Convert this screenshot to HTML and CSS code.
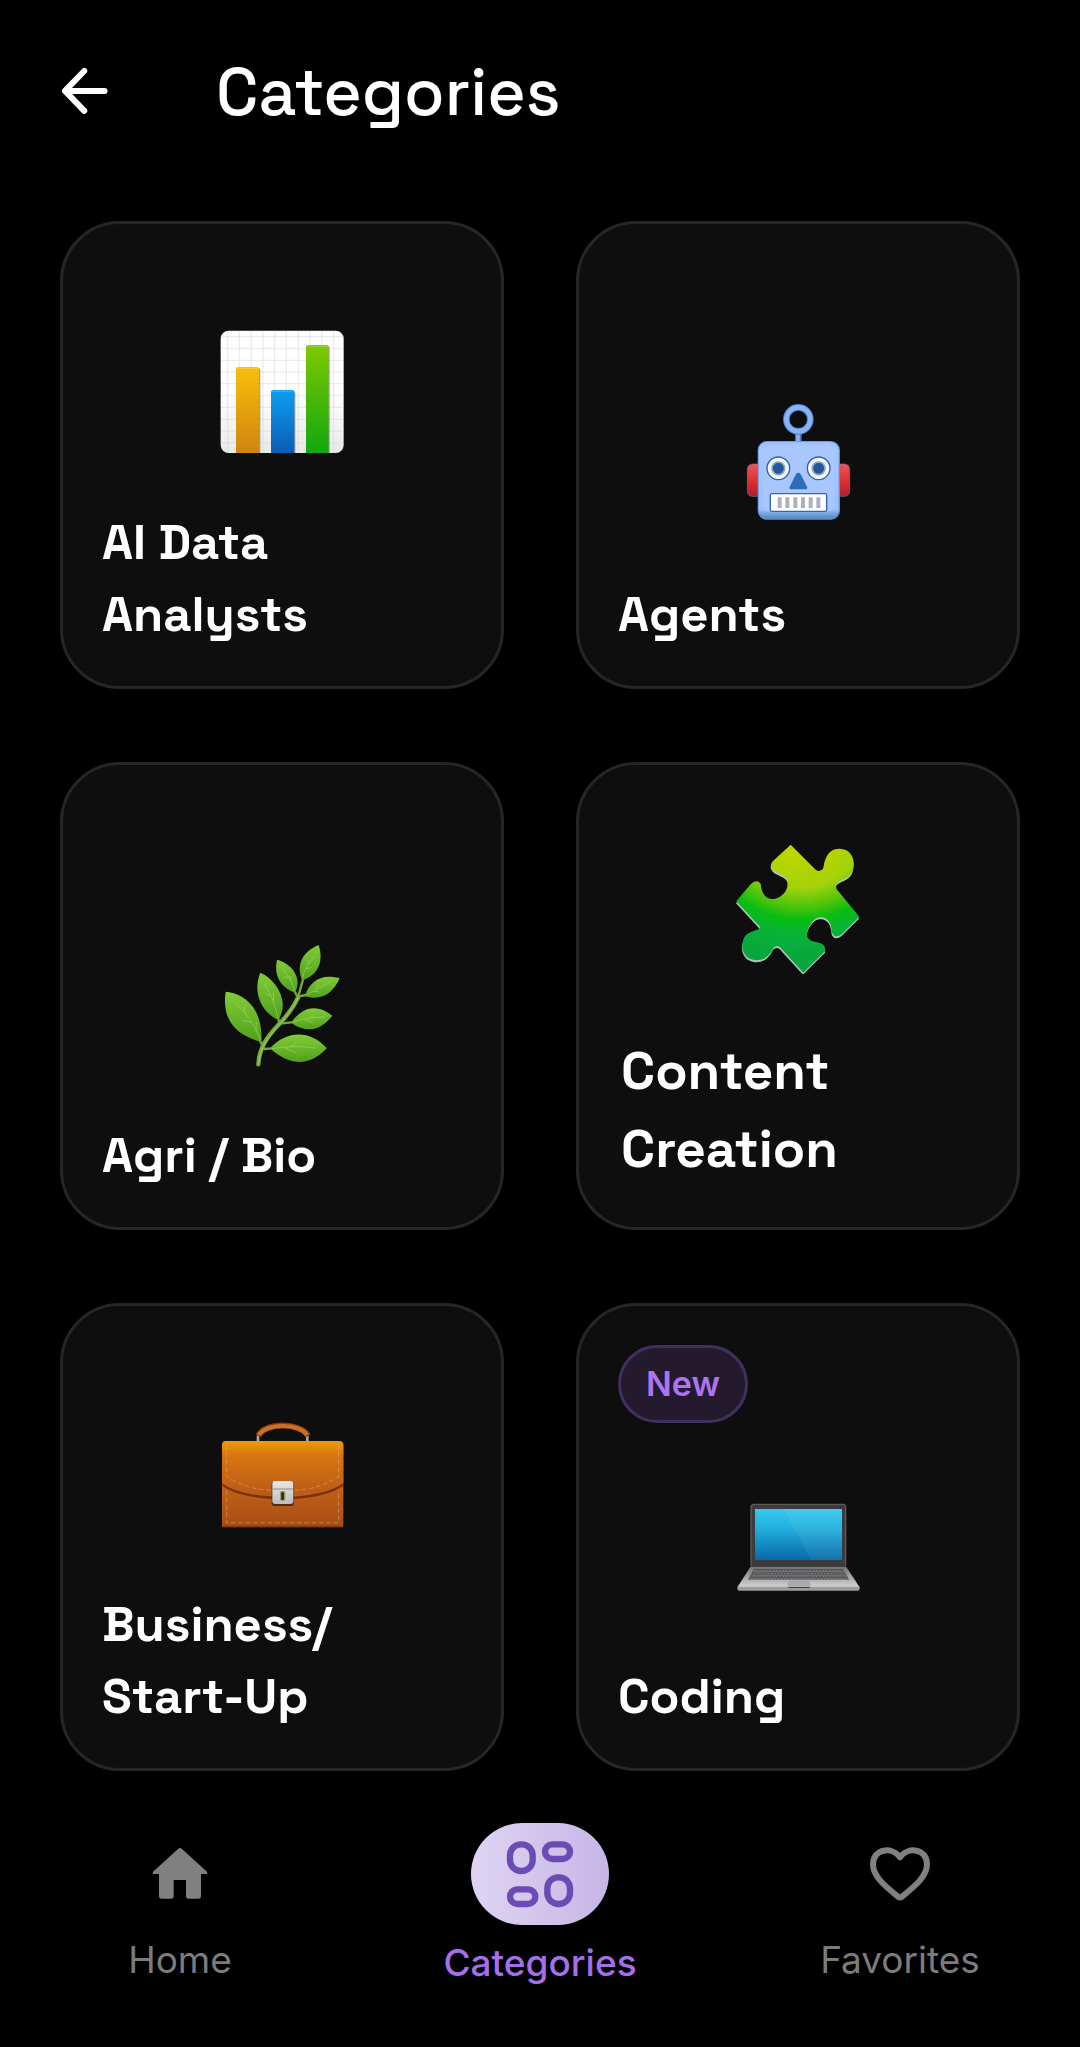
FILE: index.html
```html
<!DOCTYPE html>
<html lang="en">
<head>
<meta charset="utf-8">
<meta name="viewport" content="width=device-width, initial-scale=1">
<title>Categories</title>
<link rel="stylesheet" href="styles.css">
</head>
<body>
<div class="app">
  <header class="header">
    <button class="back" type="button" aria-label="Back">
      <svg class="back-icon" viewBox="84 110 146 146" aria-hidden="true"><path d="M152 124 98 180l54 56M100 180h109" fill="none" stroke="#fff" stroke-width="17" stroke-linecap="round" stroke-linejoin="round"/></svg>
    </button>
    <h1 class="title">Categories</h1>
  </header>

  <main class="grid">
    <a class="card" href="#analysts">
      <svg class="emoji" viewBox="60 60 372 372" aria-hidden="true">
        <defs>
          <linearGradient id="paper" x2="0" y2="1"><stop offset=".5" stop-color="#fff"/><stop offset="1" stop-color="#e9e9e9"/></linearGradient>
          <linearGradient id="amber" x2="0" y2="1"><stop stop-color="#f8bf0c"/><stop offset="1" stop-color="#d08410"/></linearGradient>
          <linearGradient id="blue" x2="0" y2="1"><stop stop-color="#0c9ff0"/><stop offset="1" stop-color="#0c5cb4"/></linearGradient>
          <linearGradient id="lime" x2="0" y2="1"><stop stop-color="#80c800"/><stop offset="1" stop-color="#10a810"/></linearGradient>
        </defs>
        <rect x="62" y="62" width="369" height="367" rx="24" fill="url(#paper)"/>
        <path d="M83 63v365M118 63v365M154 63v365M189 63v365M224 63v365M259 63v365M295 63v365M330 63v365M365 63v365M401 63v365M63 80h367M63 115h367M63 151h367M63 186h367M63 221h367M63 257h367M63 292h367M63 328h367M63 363h367M63 398h367" stroke="#d4d4d4" stroke-width="2" opacity=".8"/>
        <path d="M112 174h63q6 0 6 6v249h-73V180zM217 243h63q6 0 6 6v180h-73V249zM322 108h61q6 0 6 6v315h-71V114z" fill="#555" opacity=".55"/>
        <path d="M114 171h57q6 0 6 6v252h-69V177q0-6 6-6z" fill="url(#amber)"/>
        <path d="M219 240h58q6 0 6 6v183h-70V246q0-6 6-6z" fill="url(#blue)"/>
        <path d="M324 105h56q6 0 6 6v318h-68V111q0-6 6-6z" fill="url(#lime)"/>
        <path d="M112 175h61M217 244h61M322 109h60" stroke="#fff" stroke-width="3" opacity=".22"/>
      </svg>
      <span class="name">AI Data Analysts</span>
    </a>

    <a class="card" href="#agents">
      <svg class="emoji" viewBox="33 36 372 372" aria-hidden="true">
        <defs>
          <linearGradient id="ear" x2="0" y2="1"><stop stop-color="#ee5555"/><stop offset=".6" stop-color="#d92b30"/><stop offset="1" stop-color="#a91f2b"/></linearGradient>
          <linearGradient id="head" x2="0" y2="1"><stop stop-color="#9dc0ff"/><stop offset=".1" stop-color="#a9c7ff"/><stop offset=".88" stop-color="#9dc1fa"/><stop offset="1" stop-color="#5289c4"/></linearGradient>
        </defs>
        <path d="M102 222H84q-17 0-17 18v62q0 17 17 17h18zM340 222h17q17 0 17 18v62q0 17-17 17h-17z" fill="url(#ear)" stroke="#76709a" stroke-width="2"/>
        <path d="M220 130v28" stroke="#4777bd" stroke-width="20"/><path d="M219 130v28" stroke="#88b4f5" stroke-width="11"/>
        <circle cx="220" cy="88" r="36" fill="none" stroke="#4d7fca" stroke-width="20"/>
        <circle cx="220" cy="88" r="36" fill="none" stroke="#89b3f5" stroke-width="14"/>
        <rect x="98" y="153" width="247" height="236" rx="27" fill="#5d91d6"/>
        <rect x="101" y="155" width="240" height="230" rx="26" fill="url(#head)"/>
        <rect x="112" y="166" width="216" height="198" rx="18" fill="#a9c6ff"/>
        <g fill="#f4f5f5" stroke="#2e64a8" stroke-width="4"><circle cx="160" cy="235" r="34"/><circle cx="281" cy="235" r="34"/></g>
        <g fill="#23569a" stroke="#8fa7bd" stroke-width="5"><circle cx="160" cy="235" r="19"/><circle cx="281" cy="235" r="19"/></g>
        <path d="M220 248q5 0 8 6l18 36q3 8-6 8h-40q-9 0-6-8l18-36q3-6 8-6z" fill="#2e6bbb"/>
        <rect x="136" y="311" width="169" height="53" rx="5" fill="#fff" stroke="#3468ab" stroke-width="4"/>
        <path d="M164 322v32M187 322v32M211 322v32M234 322v32M257 322v32M280 322v32" stroke="#afb0c4" stroke-width="12"/>
      </svg>
      <span class="name">Agents</span>
    </a>

    <a class="card" href="#agri">
      <svg class="emoji" viewBox="30 36 372 372" aria-hidden="true">
        <defs>
          <linearGradient id="leaf" x2="0" y2="1"><stop stop-color="#82cc38"/><stop offset=".5" stop-color="#68b72a"/><stop offset="1" stop-color="#51a01d"/></linearGradient>
        </defs>
        <g fill="none" stroke="#75aa3b" stroke-linecap="round">
          <path d="M145 400C148 350 169 320 207 280 235 250 252 226 264 200" stroke-width="13"/>
          <path d="M264 200q7-27 16-58M264 200l-11-20M264 197l24-5M208 278l-4-20M211 278l32-4M160 348l-10-18M163 354l23-2" stroke-width="7"/>
        </g>
        <path d="M146 398C151 350 170 321 208 280 235 250 252 226 264 200" fill="none" stroke="#a8ce69" stroke-width="3"/>
        <g fill="url(#leaf)">
          <path d="M47 182C92 185 160 221 154 333 101 318 32 286 47 182z"/>
          <path d="M151 125C193 142 242 208 205 267 162 249 124 192 151 125z"/>
          <path d="M201 86C242 96 279 139 255 185 216 171 190 139 201 86z"/>
          <path d="M326 42C341 89 327 132 276 148 257 99 279 61 326 42z"/>
          <path d="M389 142C369 187 333 212 284 195 299 153 332 126 389 142z"/>
          <path d="M367 254C331 300 291 308 243 275 280 224 323 220 367 254z"/>
          <path d="M350 352C300 406 240 407 180 352 231 297 302 297 350 352z"/>
        </g>
        <g fill="none" stroke="#b5df73" stroke-width="3" opacity=".5">
          <path d="M78 217q52 50 74 111M163 158q32 51 41 105M217 112q32 37 36 68M315 75q-31 31-38 68M362 153q-40 20-73 39M342 258q-52 1-94 15M316 351q-69-9-130 2"/>
          <path d="M105 249l-2-23m23 48-28-6m40 34 1-29M183 196l-16-9m23 27 1-29M234 141l-15-4m22 16 1-17M294 102l-1-15m-5 27 17-5M318 176l8-14m-16 18 18 3M294 264l15-10m-26 12 27 8M240 348l20-12m-38 13 38 17"/>
        </g>
      </svg>
      <span class="name">Agri / Bio</span>
    </a>

    <a class="card card-large" href="#content">
      <svg class="emoji" viewBox="39 42 390 390" aria-hidden="true">
        <defs>
          <radialGradient id="puzzle" gradientUnits="userSpaceOnUse" cx="245" cy="10" r="420" gradientTransform="translate(0 2) scale(1 .9)"><stop offset=".2" stop-color="#bad500"/><stop offset=".43" stop-color="#a4d20a"/><stop offset=".6" stop-color="#42c20b"/><stop offset=".68" stop-color="#08bd12"/><stop offset=".82" stop-color="#08b13a"/><stop offset="1" stop-color="#08a63c"/></radialGradient>
          <path id="piece" d="M212 44 287 119Q300 129 311 114C313 90 323 55 359 56 394 57 407 88 399 119 391 151 350 146 348 168Q347 175 355 184L418 260 366 312Q346 328 336 308C335 285 327 259 298 262 272 267 253 312 265 325 277 343 318 330 316 362L250 428 187 359Q174 340 160 353C151 374 132 395 102 390 73 387 60 355 70 330 79 300 115 305 121 292L49 214 92 163Q109 146 122 161C124 184 134 208 158 207 180 206 205 185 204 158 204 129 161 136 153 108Q152 100 159 93z"/>
        </defs>
        <use href="#piece" x="-1" y="6" fill="#a9c9b0"/>
        <use href="#piece" fill="url(#puzzle)"/>
      </svg>
      <span class="name">Content Creation</span>
    </a>

    <a class="card" href="#business">
      <svg class="emoji" viewBox="30 15 372 372" aria-hidden="true">
        <defs>
          <linearGradient id="leather" x2="0" y2="1"><stop stop-color="#ef9606"/><stop offset=".13" stop-color="#dc7b10"/><stop offset=".5" stop-color="#c46216"/><stop offset="1" stop-color="#a74d16"/></linearGradient>
          <linearGradient id="flap" x2="0" y2="1"><stop stop-color="#f09a05"/><stop offset=".25" stop-color="#d97612"/><stop offset="1" stop-color="#b95a17"/></linearGradient>
          <linearGradient id="steel" x2="0" y2="1"><stop stop-color="#e8e8e6"/><stop offset="1" stop-color="#bcbcbc"/></linearGradient>
        </defs>
        <path d="M144 103V90q0-9 7-12M292 103V90q0-9-7-12" fill="none" stroke="#a7a7a7" stroke-width="8"/>
        <path d="M145 87C163 45 272 45 294 87" fill="none" stroke="#823b12" stroke-width="18"/>
        <path d="M147 84C166 48 270 48 291 84" fill="none" stroke="#cc7028" stroke-width="12"/>
        <path d="M48 102h339q13 0 13 14v239q0 6-6 6H42q-6 0-6-6V116q0-14 12-14z" fill="url(#leather)"/>
        <path d="M37 228c65 55 295 55 362 0v9c-70 53-292 53-362 0z" fill="#7c320e"/>
        <path d="M130 264q88 18 177 0-88 30-177 0z" fill="#7c320e" opacity=".7"/>
        <path d="M48 102h339q13 0 13 14v112c-67 48-299 48-364 0V116q0-14 12-14z" fill="url(#flap)"/>
        <path d="M50 115v93q61 41 136 41M386 115v93q-61 41-134 41M50 250v97h336v-97" fill="none" stroke="#e9b783" stroke-width="3" stroke-dasharray="14 8" opacity=".45"/>
        <path d="M42 358h352" stroke="#833a10" stroke-width="4"/>
        <rect x="185" y="224" width="67" height="73" rx="10" fill="#4e2c19"/>
        <rect x="187" y="222" width="63" height="69" rx="9" fill="url(#steel)"/>
        <path d="M188 246h61" stroke="#8e8e8e" stroke-width="3"/>
        <rect x="210" y="252" width="16" height="29" rx="4" fill="#9f9468"/><rect x="214" y="256" width="8" height="23" rx="3" fill="#2d2821"/>
      </svg>
      <span class="name">Business/<wbr>Start-Up</span>
    </a>

    <a class="card" href="#coding">
      <span class="badge">New</span>
      <svg class="emoji" viewBox="33 -21 372 372" aria-hidden="true">
        <defs>
          <linearGradient id="screen" x2="0" y2="1"><stop stop-color="#36c8ec"/><stop offset=".35" stop-color="#23b2df"/><stop offset="1" stop-color="#0869aa"/></linearGradient>
          <linearGradient id="base" x2="0" y2="1"><stop stop-color="#777"/><stop offset="1" stop-color="#d5d5d5"/></linearGradient>
        </defs>
        <rect x="76" y="38" width="288" height="193" rx="11" fill="#5b5b5b"/>
        <rect x="80" y="42" width="280" height="188" rx="7" fill="#3c3c3c"/>
        <rect x="90" y="54" width="261" height="153" fill="url(#screen)"/>
        <path d="M176 54h175v153h-93z" fill="#fff" opacity=".06"/>
        <path d="M76 228h288l40 61H37z" fill="url(#base)"/>
        <path d="M86 233h269l18 33H68z" fill="#58595c"/>
        <path d="M84 240h273M79 248h283M74 256h294M69 264h304" stroke="#bbb" stroke-width="2" stroke-dasharray="2 8"/>
        <path d="M84 242h273M77 253h288M70 264h302" stroke="#999" stroke-width="2" opacity=".6"/>
        <path d="M192 268h61l5 19h-72z" fill="#aaa"/>
        <path d="M37 287h151l5 4h59l5-4h147v6q0 6-10 6H47q-10 0-10-6z" fill="#9d9d9d"/>
      </svg>
      <span class="name">Coding</span>
    </a>
  </main>

  <nav class="tabs" aria-label="Main">
    <a class="tab" href="#home">
      <span class="pill"><svg class="tab-icon" viewBox="102 54 216 216" aria-hidden="true"><path d="M205 86q5-4 10 0l76 69q3 7-4 7h-14v66q0 8-8 8h-29q-8 0-8-8v-48h-37v48q0 8-8 8h-28q-8 0-8-8v-66h-14q-7 0-4-7z" fill="#808080"/></svg></span>
      <span class="label">Home</span>
    </a>
    <a class="tab tab-active" href="#categories" aria-current="page">
      <span class="pill"><svg class="tab-icon" viewBox="192 113 216 216" aria-hidden="true"><g fill="none" stroke="#6b4bb4" stroke-width="19"><rect x="210" y="132" width="68" height="80" rx="33"/><rect x="315" y="132" width="75" height="44" rx="22"/><rect x="210" y="267" width="76" height="44" rx="22"/><rect x="322" y="231" width="68" height="80" rx="33"/></g></svg></span>
      <span class="label">Categories</span>
    </a>
    <a class="tab" href="#favorites">
      <span class="pill"><svg class="tab-icon" viewBox="192 54 216 216" aria-hidden="true"><path d="M300 112C276 78 219 86 219 133 219 168 252 196 294 230Q300 235 306 230C348 196 381 168 381 133 381 86 324 78 300 112z" fill="none" stroke="#808080" stroke-width="18" stroke-linejoin="round"/></svg></span>
      <span class="label">Favorites</span>
    </a>
  </nav>
</div>
</body>
</html>
```
FILE: styles.css
```css
* {
  box-sizing: border-box;
}

body {
  margin: 0;
  background: #000;
  color: #fff;
  font-family: "Space Grotesk", Inter, "Liberation Sans", sans-serif;
}

a {
  color: inherit;
  text-decoration: none;
}

svg {
  display: block;
}

.app {
  display: flex;
  flex-direction: column;
  min-height: 100vh;
}

.header {
  display: flex;
  align-items: center;
  gap: 104px;
  padding: 52px 60px 89px;
}

.back {
  padding: 0;
  border: 0;
  background: none;
}

.back-icon {
  width: 52px;
  height: 52px;
}

.title {
  margin: 0;
  font-size: 66px;
  font-weight: 500;
  line-height: 80px;
}

.grid {
  display: grid;
  grid-template-columns: 1fr 1fr;
  gap: 73px 72px;
  padding: 0 60px;
}

.card {
  display: flex;
  flex-direction: column;
  min-height: 468px;
  padding: 39px 39px 36px;
  border: 3px solid #262626;
  border-radius: 60px;
  background: #0e0e0e;
  font-size: 49px;
  font-weight: 700;
  line-height: 72px;
}

.emoji {
  width: 124px;
  height: 124px;
  margin: auto auto 52px;
}

.name {
  max-width: 260px;
}

.card-large {
  padding: 39px 42px;
  font-size: 53px;
  line-height: 78px;
}

.card-large .emoji {
  width: 130px;
  height: 130px;
  margin-bottom: 58px;
}

.badge {
  align-self: flex-start;
  padding: 12px 25px;
  border: 3px solid #432f5f;
  border-radius: 39px;
  background: #231a2e;
  color: #ac74f0;
  font-family: Inter, "Liberation Sans", sans-serif;
  font-size: 34px;
  font-weight: 600;
  line-height: 48px;
}

.tabs {
  display: grid;
  grid-template-columns: repeat(3, 1fr);
  margin-top: auto;
  padding: 51px 0 62px;
  font-family: Inter, "Liberation Sans", sans-serif;
  font-size: 37px;
  line-height: 44px;
}

.tab {
  display: flex;
  flex-direction: column;
  align-items: center;
  gap: 13px;
  color: #7c7c7c;
}

.tab-active {
  gap: 16px;
  color: #a56fea;
  font-weight: 500;
}

.pill {
  display: grid;
  place-items: center;
  width: 138px;
  height: 102px;
  border-radius: 51px;
}

.tab-active .pill {
  background: linear-gradient(90deg, #ded4f2, #c6b6e6);
}

.tab-icon {
  width: 72px;
  height: 72px;
}
```
